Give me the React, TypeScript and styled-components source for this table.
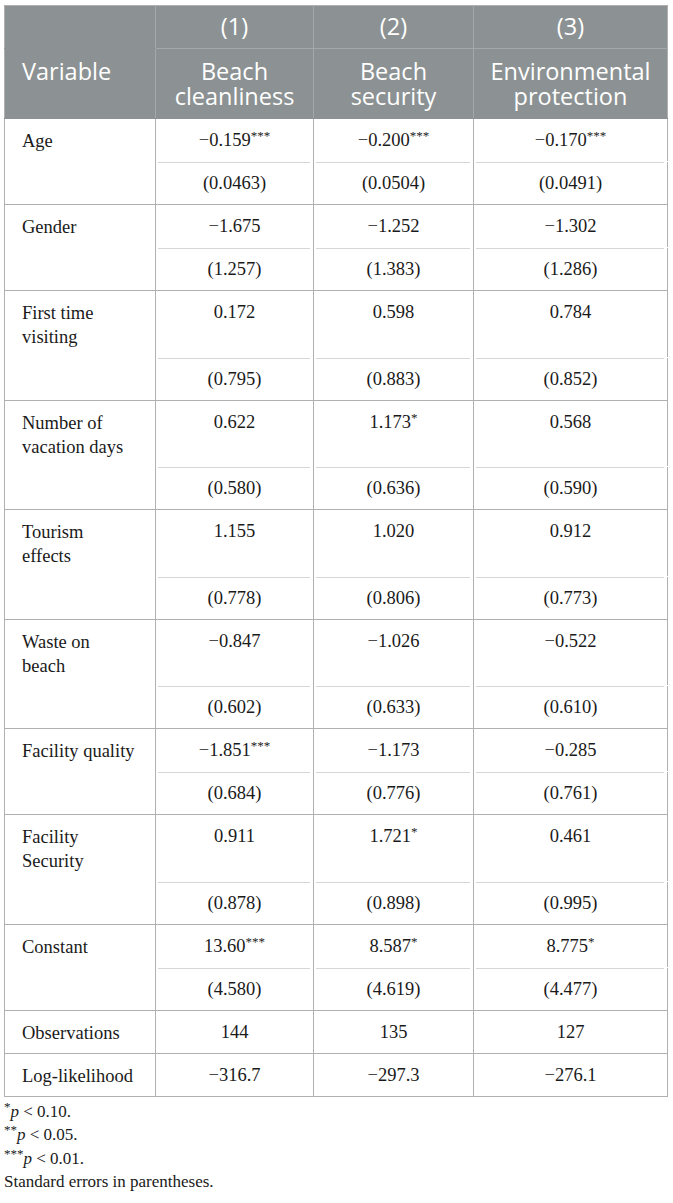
import React from "react";
import styled, { createGlobalStyle } from "styled-components";

const GlobalStyle = createGlobalStyle`
  html, body {
    margin: 0;
    padding: 0;
    background: #ffffff;
  }
  body {
    padding: 4px 6px 0 4px;
    font-family: "Liberation Serif", "Times New Roman", serif;
    color: #1a1a1a;
  }
`;

const Table = styled.table`
  width: 663px;
  table-layout: fixed;
  border-collapse: collapse;
  border: 1px solid #b0b0b0;
  margin-top: 1px;
`;

const HeadCell = styled.th<{ $align?: "left" | "center"; $split?: boolean }>`
  background: #8c9293;
  color: #ffffff;
  font-family: "Open Sans", "Liberation Sans", sans-serif;
  font-weight: 400;
  font-size: 23.5px;
  line-height: 25px;
  text-align: ${(p) => p.$align || "center"};
  vertical-align: top;
  padding: ${(p) => (p.$split ? "8px 6px 9px" : "10px 6px 9px 17px")};
  border-left: 1px solid #a3a8a9;
  border-bottom: 1px solid ${(p) => (p.$split ? "#a3a8a9" : "#8c9293")};
  &:first-child {
    border-left: none;
  }
`;

const HeadSub = styled(HeadCell)`
  padding: 10px 4px 9px;
`;

const LabelCell = styled.td`
  font-size: 18.5px;
  line-height: 24px;
  text-align: left;
  vertical-align: top;
  padding: 10px 8px 0 17px;
  border-top: 1px solid #b0b0b0;
  border-right: 1px solid #b0b0b0;
`;

const ValueCell = styled.td<{ $tall?: boolean; $se?: boolean }>`
  font-size: 18.5px;
  line-height: 24px;
  text-align: center;
  vertical-align: top;
  height: ${(p) => (p.$tall ? "47.6px" : "24px")};
  padding: 9px 6px 9px;
  border-top: ${(p) => (p.$se ? "1px solid transparent" : "1px solid #b0b0b0")};
  border-left: 1px solid #b0b0b0;
  background: ${(p) =>
    p.$se
      ? "linear-gradient(#d6d6d6, #d6d6d6) no-repeat left 2px top 0 / calc(100% - 5px) 1px"
      : "none"};
`;

const Stars = styled.sup`
  font-size: 13px;
  line-height: 0;
  vertical-align: 6px;
`;

const Notes = styled.div`
  margin-top: 3px;
  font-size: 17px;
  line-height: 23.4px;
`;

const Italic = styled.i`
  font-style: italic;
`;

type Row = {
  label: string[];
  values: string[];
  errors?: string[];
};

const rows: Row[] = [
  { label: ["Age"], values: ["−0.159***", "−0.200***", "−0.170***"], errors: ["(0.0463)", "(0.0504)", "(0.0491)"] },
  { label: ["Gender"], values: ["−1.675", "−1.252", "−1.302"], errors: ["(1.257)", "(1.383)", "(1.286)"] },
  { label: ["First time", "visiting"], values: ["0.172", "0.598", "0.784"], errors: ["(0.795)", "(0.883)", "(0.852)"] },
  { label: ["Number of", "vacation days"], values: ["0.622", "1.173*", "0.568"], errors: ["(0.580)", "(0.636)", "(0.590)"] },
  { label: ["Tourism", "effects"], values: ["1.155", "1.020", "0.912"], errors: ["(0.778)", "(0.806)", "(0.773)"] },
  { label: ["Waste on", "beach"], values: ["−0.847", "−1.026", "−0.522"], errors: ["(0.602)", "(0.633)", "(0.610)"] },
  { label: ["Facility quality"], values: ["−1.851***", "−1.173", "−0.285"], errors: ["(0.684)", "(0.776)", "(0.761)"] },
  { label: ["Facility", "Security"], values: ["0.911", "1.721*", "0.461"], errors: ["(0.878)", "(0.898)", "(0.995)"] },
  { label: ["Constant"], values: ["13.60***", "8.587*", "8.775*"], errors: ["(4.580)", "(4.619)", "(4.477)"] },
  { label: ["Observations"], values: ["144", "135", "127"] },
  { label: ["Log-likelihood"], values: ["−316.7", "−297.3", "−276.1"] },
];

function Value({ text }: { text: string }) {
  const m = text.match(/^(.*?)(\**)$/);
  const num = m ? m[1] : text;
  const stars = m ? m[2] : "";
  return (
    <>
      {num}
      {stars && <Stars>{stars}</Stars>}
    </>
  );
}

export default function App() {
  return (
    <>
      <GlobalStyle />
      <Table>
        <colgroup>
          <col style={{ width: 151 }} />
          <col style={{ width: 158 }} />
          <col style={{ width: 160 }} />
          <col style={{ width: 194 }} />
        </colgroup>
        <thead>
          <tr>
            <HeadCell />
            <HeadCell $split>(1)</HeadCell>
            <HeadCell $split>(2)</HeadCell>
            <HeadCell $split>(3)</HeadCell>
          </tr>
          <tr>
            <HeadCell $align="left">Variable</HeadCell>
            <HeadSub>
              Beach
              <br />
              cleanliness
            </HeadSub>
            <HeadSub>
              Beach
              <br />
              security
            </HeadSub>
            <HeadSub>
              Environmental
              <br />
              protection
            </HeadSub>
          </tr>
        </thead>
        <tbody>
          {rows.map((row) => {
            const tall = row.label.length > 1;
            return (
              <React.Fragment key={row.label.join(" ")}>
                <tr>
                  <LabelCell rowSpan={row.errors ? 2 : 1}>
                    {row.label.map((l, i) => (
                      <React.Fragment key={l}>
                        {i > 0 && <br />}
                        {l}
                      </React.Fragment>
                    ))}
                  </LabelCell>
                  {row.values.map((v, i) => (
                    <ValueCell key={i} $tall={tall}>
                      <Value text={v} />
                    </ValueCell>
                  ))}
                </tr>
                {row.errors && (
                  <tr>
                    {row.errors.map((e, i) => (
                      <ValueCell key={i} $se>
                        {e}
                      </ValueCell>
                    ))}
                  </tr>
                )}
              </React.Fragment>
            );
          })}
        </tbody>
      </Table>
      <Notes>
        <div>
          <Stars>*</Stars>
          <Italic>p</Italic> &lt; 0.10.
        </div>
        <div>
          <Stars>**</Stars>
          <Italic>p</Italic> &lt; 0.05.
        </div>
        <div>
          <Stars>***</Stars>
          <Italic>p</Italic> &lt; 0.01.
        </div>
        <div>Standard errors in parentheses.</div>
      </Notes>
    </>
  );
}
